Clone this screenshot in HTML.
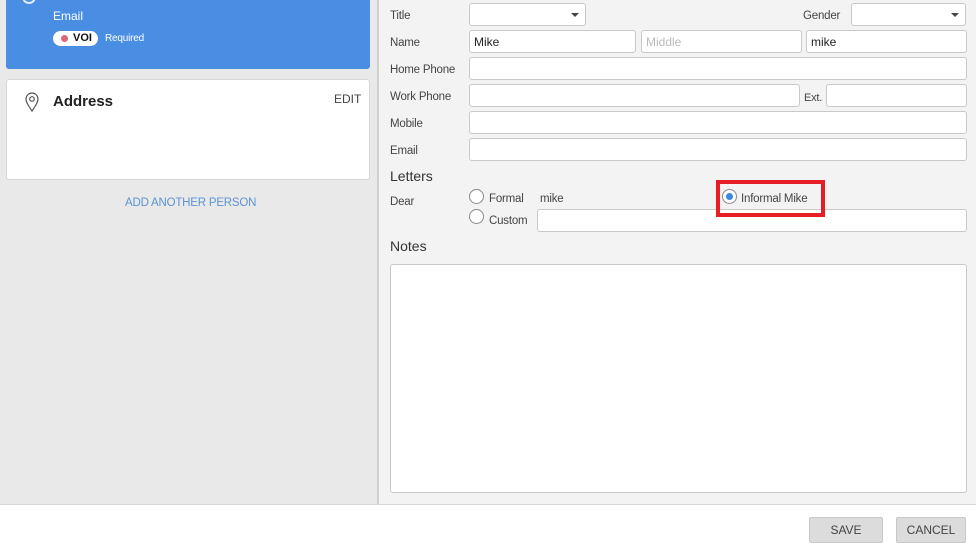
<!DOCTYPE html>
<html><head><meta charset="utf-8"><style>
*{box-sizing:border-box;margin:0;padding:0}
body{width:976px;height:553px;overflow:hidden;font-family:"Liberation Sans",sans-serif;background:#fff;position:relative;color:#333}
.a{position:absolute}
.lbl{position:absolute;font-size:11.5px;color:#444;letter-spacing:-0.2px;margin-top:2px}
.in{position:absolute;background:#fff;border:1px solid #c9c9c9;border-radius:3px;height:23px;font-size:12px;padding:4px 4px;color:#222}
.caret{position:absolute;right:6px;top:9px;width:0;height:0;border-left:4px solid transparent;border-right:4px solid transparent;border-top:4px solid #444}
.radio{position:absolute;width:15px;height:15px;border:1px solid #888;border-radius:50%;background:#fff}
.btn{position:absolute;top:517px;height:26px;background:#dcdcdc;border:1px solid #c8c8c8;border-radius:2px;font-size:12px;color:#444;text-align:center;line-height:24px}
</style></head><body>
<div class="a" style="left:0;top:0;width:377px;height:505px;background:#e9e9e9"></div>
<div class="a" style="left:377px;top:0;width:2px;height:505px;background:#d0d0d0"></div>
<div class="a" style="left:379px;top:0;width:597px;height:505px;background:#f3f3f3"></div>
<div class="a" style="left:0;top:504px;width:976px;height:1px;background:#d6d6d6"></div>

<div class="a" style="left:6px;top:-4px;width:364px;height:73px;background:#4a8ee3;border-radius:3px"></div>
<div class="a" style="left:22px;top:-10px;width:14px;height:14px;border:2px solid #dfe9f8;border-radius:50%"></div>
<div class="a" style="left:53px;top:9px;font-size:12px;color:#fff">Email</div>
<div class="a" style="left:53px;top:31px;width:45px;height:15px;background:#fff;border-radius:8px"></div>
<div class="a" style="left:61px;top:35px;width:7px;height:7px;background:#d9677a;border-radius:50%"></div>
<div class="a" style="left:73px;top:31px;font-size:11px;font-weight:bold;color:#111;line-height:15px">VOI</div>
<div class="a" style="left:105px;top:33px;font-size:10px;color:#fff;letter-spacing:-0.2px">Required</div>

<div class="a" style="left:6px;top:79px;width:364px;height:101px;background:#fff;border:1px solid #d6d6d6;border-radius:3px"></div>
<svg class="a" style="left:24px;top:91px" width="16" height="22" viewBox="0 0 16 22"><path d="M8 20 C4 14 2 11 2 8 A6 6 0 0 1 14 8 C14 11 12 14 8 20Z" fill="none" stroke="#555" stroke-width="1.2"/><circle cx="8" cy="8" r="2.3" fill="none" stroke="#555" stroke-width="1.2"/></svg>
<div class="a" style="left:53px;top:93px;font-size:15px;font-weight:bold;color:#222">Address</div>
<div class="a" style="left:334px;top:92px;font-size:12px;color:#444">EDIT</div>
<div class="a" style="left:125px;top:197px;font-size:11.5px;color:#5b93d6;letter-spacing:-0.2px">ADD ANOTHER PERSON</div>

<div class="lbl" style="left:390px;top:8px">Title</div>
<div class="in" style="left:469px;top:3px;width:117px"><div class="caret"></div></div>
<div class="lbl" style="left:803px;top:8px">Gender</div>
<div class="in" style="left:851px;top:3px;width:115px"><div class="caret"></div></div>
<div class="lbl" style="left:390px;top:35px">Name</div>
<div class="in" style="left:469px;top:30px;width:167px">Mike</div>
<div class="in" style="left:641px;top:30px;width:161px;color:#bbb">Middle</div>
<div class="in" style="left:806px;top:30px;width:161px">mike</div>
<div class="lbl" style="left:390px;top:62px">Home Phone</div>
<div class="in" style="left:469px;top:57px;width:498px"></div>
<div class="lbl" style="left:390px;top:89px">Work Phone</div>
<div class="in" style="left:469px;top:84px;width:331px"></div>
<div class="lbl" style="left:804px;top:90px;font-size:11px">Ext.</div>
<div class="in" style="left:826px;top:84px;width:141px"></div>
<div class="lbl" style="left:390px;top:116px">Mobile</div>
<div class="in" style="left:469px;top:111px;width:498px"></div>
<div class="lbl" style="left:390px;top:143px">Email</div>
<div class="in" style="left:469px;top:138px;width:498px"></div>
<div class="a" style="left:390px;top:168px;font-size:14px;color:#333">Letters</div>
<div class="lbl" style="left:390px;top:194px">Dear</div>
<div class="radio" style="left:469px;top:189px"></div>
<div class="lbl" style="left:489px;top:191px">Formal</div>
<div class="lbl" style="left:540px;top:191px">mike</div>
<div class="radio" style="left:469px;top:209px"></div>
<div class="lbl" style="left:489px;top:213px">Custom</div>
<div class="in" style="left:537px;top:209px;width:430px;height:23px"></div>
<div class="radio" style="left:722px;top:189px"></div>
<div class="a" style="left:726px;top:193px;width:7px;height:7px;border-radius:50%;background:#3a88e0"></div>
<div class="lbl" style="left:741px;top:191px">Informal&nbsp;Mike</div>
<div class="a" style="left:716px;top:180px;width:109px;height:37px;border:4px solid #e61e25;z-index:5"></div>
<div class="a" style="left:390px;top:238px;font-size:14px;color:#333">Notes</div>
<div class="in" style="left:390px;top:264px;width:577px;height:229px"></div>

<div class="btn" style="left:809px;width:74px">SAVE</div>
<div class="btn" style="left:896px;width:70px">CANCEL</div>
</body></html>
